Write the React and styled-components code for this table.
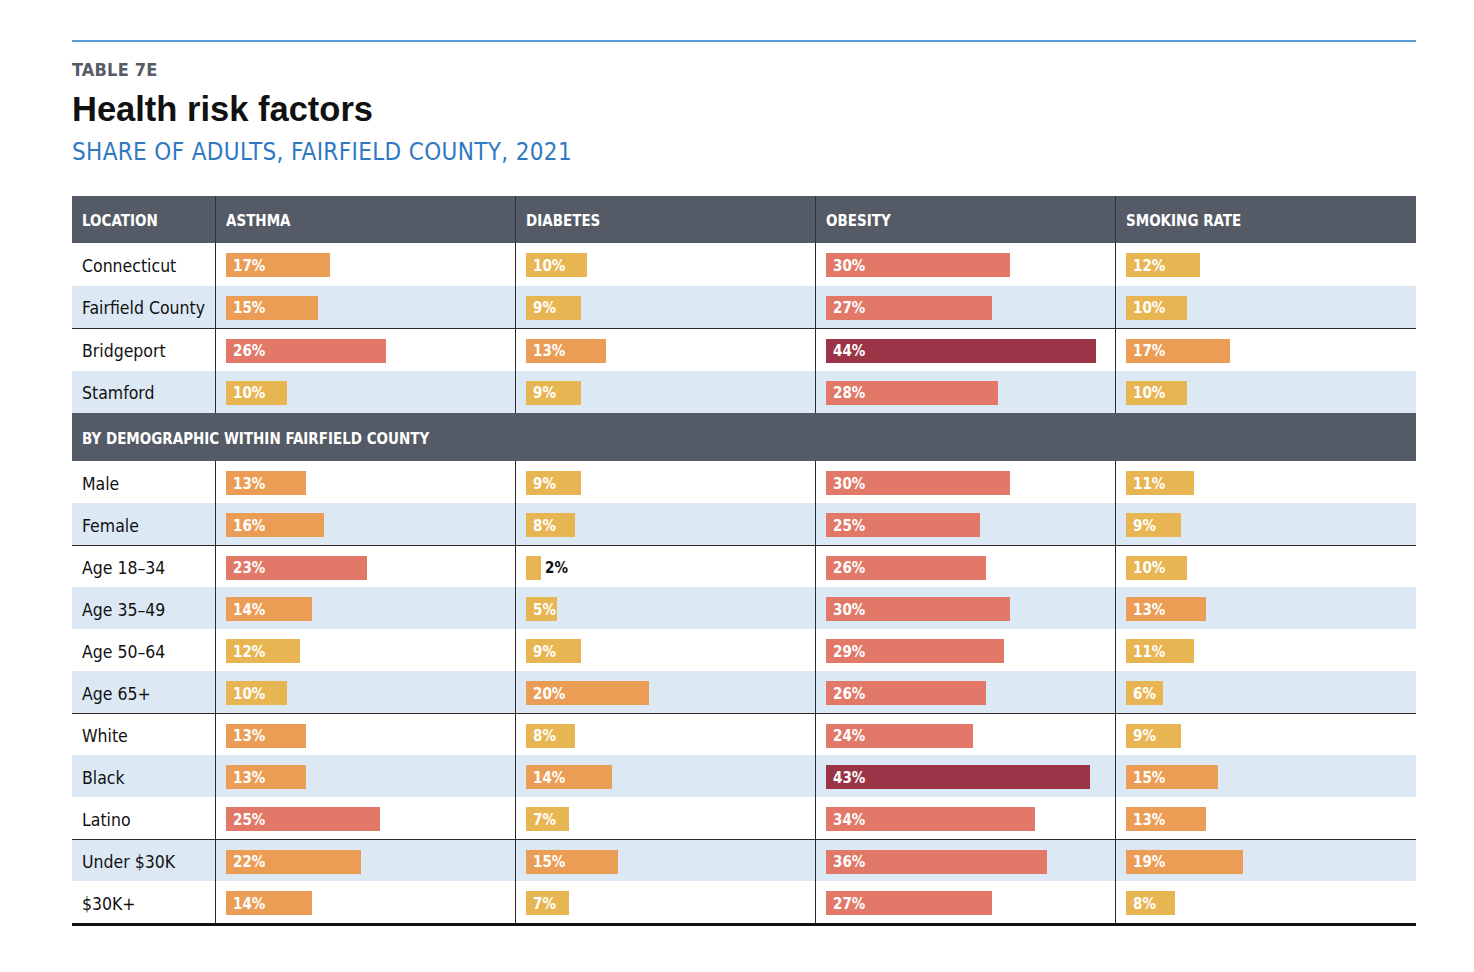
import React from "react";
import styled, { createGlobalStyle } from "styled-components";

const COND = `"DejaVu Sans Condensed", "Liberation Sans", Arial, sans-serif`;

const GlobalStyle = createGlobalStyle`
  html, body { margin: 0; padding: 0; background: #ffffff; }
  body { font-family: "Liberation Sans", Arial, sans-serif; color: #111; }
`;

const Page = styled.div`
  width: 1344px;
  padding: 40px 0 40px 72px;
`;

const TopRule = styled.div`
  height: 2px;
  background: #5b9bd5;
`;

const Kicker = styled.div`
  margin-top: 17px;
  font-family: ${COND};
  font-size: 18px;
  line-height: 22px;
  font-weight: 700;
  color: #555c66;
  letter-spacing: 0.2px;
`;

const Title = styled.h1`
  margin: 8px 0 0;
  font-size: 34.5px;
  line-height: 40px;
  font-weight: 700;
  color: #111;
`;

const Subtitle = styled.div`
  margin-top: 9px;
  font-family: ${COND};
  font-size: 24px;
  line-height: 28px;
  color: #2f78c2;
  letter-spacing: 0.35px;
`;

const Table = styled.div`
  margin-top: 30px;
  border-bottom: 3px solid #111;
`;

const Row = styled.div`
  display: grid;
  grid-template-columns: 143px repeat(4, 300px);
  height: ${(p) => (p.$tall ? "42.5px" : "42px")};
  box-sizing: border-box;
  background: ${(p) => (p.$shade ? "#dce9f5" : "#ffffff")};
  border-top: ${(p) => (p.$divider ? "1px solid #2a2a2a" : "none")};
`;

const HeadRow = styled.div`
  display: grid;
  grid-template-columns: 143px repeat(4, 300px);
  height: 47px;
  background: #545b66;
`;

const HeadCell = styled.div`
  display: flex;
  align-items: center;
  padding-left: 10px;
  padding-top: 2px;
  font-family: ${COND};
  font-size: 15px;
  font-weight: 700;
  color: #ffffff;
  border-left: ${(p) => (p.$first ? "none" : "1px solid #2e3238")};
`;

const SectionRow = styled.div`
  height: 48px;
  background: #545b66;
  display: flex;
  align-items: center;
  padding-left: 10px;
  padding-top: 4px;
  box-sizing: border-box;
  font-family: ${COND};
  font-size: 15px;
  font-weight: 700;
  color: #ffffff;
`;

const LabelCell = styled.div`
  display: flex;
  align-items: center;
  padding-left: 10px;
  padding-top: 3px;
  font-family: ${COND};
  font-size: 17.5px;
  color: #111;
  white-space: nowrap;
`;

const BarCell = styled.div`
  display: flex;
  align-items: center;
  padding-left: 10px;
  padding-top: 2px;
  border-left: 1px solid #2a2a2a;
`;

const Bar = styled.div`
  height: 24px;
  box-sizing: border-box;
  padding-left: 7px;
  padding-top: 1px;
  display: flex;
  align-items: center;
  background: ${(p) => p.$color};
  color: #ffffff;
  font-family: ${COND};
  font-size: 15px;
  font-weight: 700;
  white-space: nowrap;
`;

const OutsideLabel = styled.span`
  margin-left: 4px;
  padding-top: 1px;
  font-family: ${COND};
  font-size: 15px;
  font-weight: 700;
  color: #111;
`;

const colorFor = (v) => {
  if (v > 40) return "#9b3446";
  if (v >= 23) return "#e17868";
  if (v >= 13) return "#eb9d56";
  return "#e8b553";
};

const SCALE = 6.14;

function Value({ v }) {
  const w = Math.max(15, v * SCALE);
  const small = w < 28;
  return (
    <BarCell>
      <Bar $color={colorFor(v)} style={{ width: `${w}px` }}>
        {small ? null : `${v}%`}
      </Bar>
      {small ? <OutsideLabel>{v}%</OutsideLabel> : null}
    </BarCell>
  );
}

const locations = [
  { name: "Connecticut", v: [17, 10, 30, 12] },
  { name: "Fairfield County", v: [15, 9, 27, 10] },
  { name: "Bridgeport", v: [26, 13, 44, 17], divider: true },
  { name: "Stamford", v: [10, 9, 28, 10] },
];

const demographics = [
  { name: "Male", v: [13, 9, 30, 11] },
  { name: "Female", v: [16, 8, 25, 9] },
  { name: "Age 18–34", v: [23, 2, 26, 10], divider: true },
  { name: "Age 35–49", v: [14, 5, 30, 13] },
  { name: "Age 50–64", v: [12, 9, 29, 11] },
  { name: "Age 65+", v: [10, 20, 26, 6] },
  { name: "White", v: [13, 8, 24, 9], divider: true },
  { name: "Black", v: [13, 14, 43, 15] },
  { name: "Latino", v: [25, 7, 34, 13] },
  { name: "Under $30K", v: [22, 15, 36, 19], divider: true },
  { name: "$30K+", v: [14, 7, 27, 8] },
];

const headers = ["LOCATION", "ASTHMA", "DIABETES", "OBESITY", "SMOKING RATE"];

function DataRow({ row, shade, tall }) {
  return (
    <Row $shade={shade} $divider={row.divider} $tall={tall}>
      <LabelCell>{row.name}</LabelCell>
      {row.v.map((v, i) => (
        <Value key={i} v={v} />
      ))}
    </Row>
  );
}

export default function App() {
  return (
    <>
      <GlobalStyle />
      <Page>
        <TopRule />
        <Kicker>TABLE 7E</Kicker>
        <Title>Health risk factors</Title>
        <Subtitle>SHARE OF ADULTS, FAIRFIELD COUNTY, 2021</Subtitle>
        <Table>
          <HeadRow>
            {headers.map((h, i) => (
              <HeadCell key={h} $first={i === 0}>
                {h}
              </HeadCell>
            ))}
          </HeadRow>
          {locations.map((r, i) => (
            <DataRow key={r.name} row={r} shade={i % 2 === 1} tall />
          ))}
          <SectionRow>BY DEMOGRAPHIC WITHIN FAIRFIELD COUNTY</SectionRow>
          {demographics.map((r, i) => (
            <DataRow key={r.name} row={r} shade={i % 2 === 1} />
          ))}
        </Table>
      </Page>
    </>
  );
}
